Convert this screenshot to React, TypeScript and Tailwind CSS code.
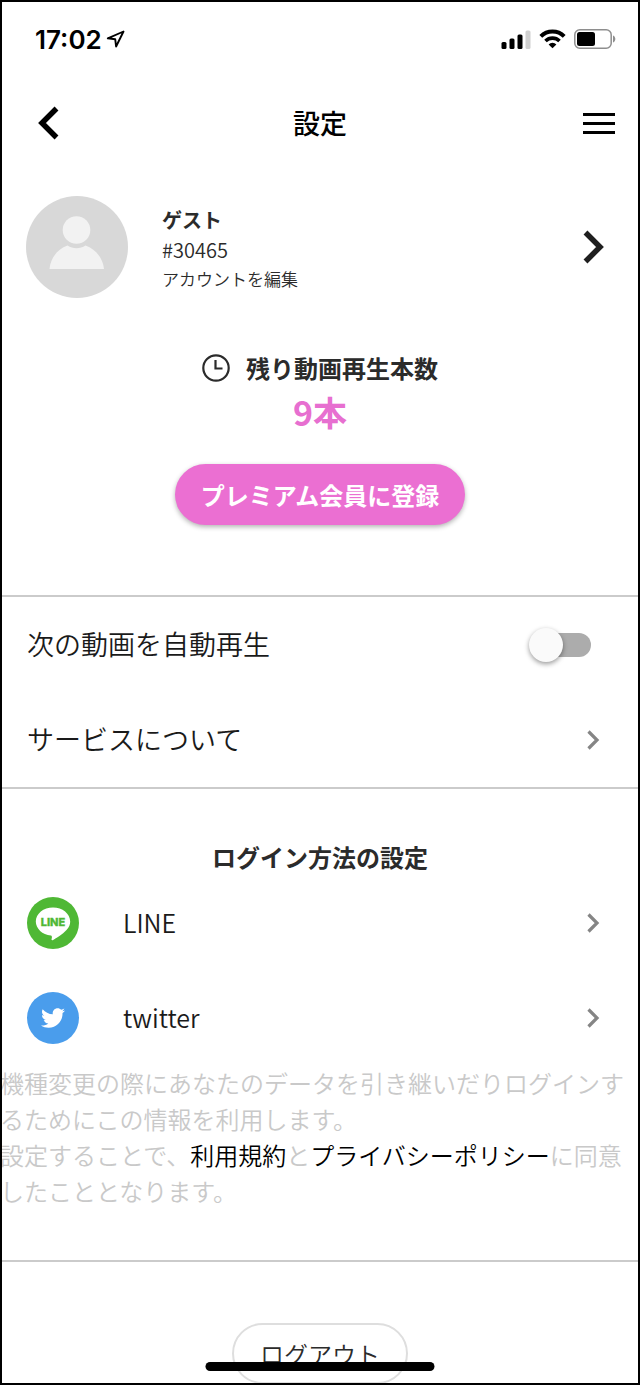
import { useState, type ReactNode } from "react";
import clsx from "clsx";
import { FaTwitter } from "react-icons/fa";

function StatusIcons() {
  return (
    <div className="flex items-center gap-2">
      <svg width="30" height="19" viewBox="0 0 30 19" aria-hidden="true">
        <rect x="0.5" y="12" width="5" height="7" rx="1.5" />
        <rect x="8.5" y="8.5" width="5" height="10.5" rx="1.5" />
        <rect x="16.5" y="4.5" width="5" height="14.5" rx="1.5" />
        <rect x="24.5" y="0.5" width="5" height="18.5" rx="1.5" fill="#d0d0d0" />
      </svg>
      <svg width="27" height="20" viewBox="0 0 27 20" aria-hidden="true">
        <g fill="none" stroke="#000" strokeWidth="4">
          <path d="M1.8 7.3a16.6 16.6 0 0 1 23.4 0" />
          <path d="M6.5 12a10 10 0 0 1 14 0" strokeWidth="3.6" />
        </g>
        <path d="M13.5 19.2 9.6 15.4a5.5 5.5 0 0 1 7.8 0z" />
      </svg>
      <svg width="42" height="20" viewBox="0 0 42 20" aria-hidden="true">
        <rect x="0.8" y="0.8" width="36.4" height="18.4" rx="5" fill="none" stroke="#8e8e8e" strokeWidth="1.5" />
        <rect x="3" y="3" width="18" height="14" rx="2.5" />
        <path d="M39 6.5c1.6.6 2.3 2 2.3 3.5s-.7 2.9-2.3 3.5z" fill="#8e8e8e" />
      </svg>
    </div>
  );
}

function Chevron({ size, className }: { size: "lg" | "sm"; className?: string }) {
  return size === "lg" ? (
    <svg width="22" height="34" viewBox="0 0 22 34" fill="none" className={className} aria-hidden="true">
      <path d="M2.5 2.5 17 17 2.5 31.5" stroke="currentColor" strokeWidth="5.5" />
    </svg>
  ) : (
    <svg width="13" height="20" viewBox="0 0 13 20" fill="none" className={className} aria-hidden="true">
      <path d="M1.5 1.5 10 10l-8.5 8.5" stroke="currentColor" strokeWidth="3.2" />
    </svg>
  );
}

function Avatar() {
  return (
    <svg width="102" height="102" viewBox="0 0 102 102" aria-hidden="true">
      <circle cx="51" cy="51" r="51" fill="#d8d8d8" />
      <circle cx="50.5" cy="34" r="13.8" fill="#f2f2f2" />
      <path d="M23.5 73c1-11 8-20 18-23.5 5.5 3.7 12.5 3.7 18 0C69.5 53 77 62 78 73z" fill="#f2f2f2" />
    </svg>
  );
}

function LineLogo() {
  return (
    <svg width="52" height="52" viewBox="0 0 52 52" aria-hidden="true">
      <circle cx="26" cy="26" r="26" fill="#4fb835" />
      <path
        d="M26 10.5c9.5 0 17.2 6.2 17.2 14 0 3.1-1.2 5.9-3.7 8.6-3.6 4.1-11.6 9.1-13.4 9.900-1.800.8-1.600-.5-1.500-.9l.3-1.500c.1-.6 0-1.700-1-2C15.4 37.8 8.8 31.6 8.8 24.5c0-7.8 7.7-14 17.2-14z"
        fill="#fff"
      />
      <text
        x="26"
        y="29"
        textAnchor="middle"
        fill="#4fb835"
        stroke="#4fb835"
        strokeWidth="0.3"
        className="font-['Inter',sans-serif] text-[11px] font-extrabold"
      >
        LINE
      </text>
    </svg>
  );
}

function TwitterLogo() {
  return (
    <span className="flex size-[52px] items-center justify-center rounded-full bg-[#4a9dec]">
      <FaTwitter className="size-6 text-white" aria-hidden="true" />
    </span>
  );
}

function LinkRow({ icon, label }: { icon?: ReactNode; label: string }) {
  return (
    <a
      href="#"
      className={clsx(
        "flex h-[95px] items-center pr-10 pl-[27px] font-[350] text-[#1a1a1a]",
        icon ? "text-[25px]" : "text-[27px]",
      )}
    >
      {icon && <span className="mr-11">{icon}</span>}
      <span className="flex-1">{label}</span>
      <Chevron size="sm" className="text-[#858585]" />
    </a>
  );
}

export default function App() {
  const [autoPlay, setAutoPlay] = useState(false);

  return (
    <div className="relative h-screen overflow-hidden bg-white font-['Noto_Sans_CJK_JP',sans-serif] text-[#2b2b2b]">
      <div className="flex h-[78px] items-center justify-between pr-6 pl-[35px] text-black">
        <div className="flex items-center gap-1">
          <span className="font-['Inter',sans-serif] text-[26px] font-semibold">17:02</span>
          <svg width="19" height="19" viewBox="0 0 19 19" fill="none" aria-hidden="true">
            <path d="M17.5 1.5 1.8 8.3l7.4.9.9 7.3z" stroke="#000" strokeWidth="1.9" strokeLinejoin="round" />
          </svg>
        </div>
        <StatusIcons />
      </div>

      <header className="grid h-[90px] grid-cols-[1fr_auto_1fr] items-center px-[25px] text-black">
        <button type="button" aria-label="戻る" className="justify-self-start pl-3">
          <Chevron size="lg" className="rotate-180" />
        </button>
        <h1 className="text-[27px] font-medium">設定</h1>
        <button type="button" aria-label="メニュー" className="flex flex-col gap-[6px] justify-self-end">
          <span className="h-[3px] w-8 bg-black" />
          <span className="h-[3px] w-8 bg-black" />
          <span className="h-[3px] w-8 bg-black" />
        </button>
      </header>

      <a href="#" className="flex h-[158px] items-center pr-[35px] pl-[26px]">
        <Avatar />
        <div className="ml-[34px] flex-1 pt-1">
          <p className="text-[20px] leading-[30px] font-bold">ゲスト</p>
          <p className="text-[20px] leading-[30px] font-[350]">#30465</p>
          <p className="text-[17px] leading-[28px] font-[350]">アカウントを編集</p>
        </div>
        <Chevron size="lg" className="text-[#1f1f1f]" />
      </a>

      <section className="flex flex-col items-center pt-6 pb-[70px]">
        <h2 className="flex h-9 items-center gap-4 text-[24px] font-bold">
          <svg width="28" height="28" viewBox="0 0 28 28" fill="none" stroke="currentColor" strokeWidth="2.2" aria-hidden="true">
            <circle cx="14" cy="14" r="12.7" />
            <path d="M13.5 6v8.5h7" />
          </svg>
          残り動画再生本数
        </h2>
        <p className="h-[52px] text-[34px] leading-[52px] font-bold text-[#e76fd0]">9本</p>
        <button
          type="button"
          className="mt-[26px] h-[61px] rounded-full bg-[#eb6fd2] px-[26px] text-[24px] font-bold text-white shadow-[0_2px_5px_rgba(0,0,0,0.3)]"
        >
          プレミアム会員に登録
        </button>
      </section>

      <section className="border-t-2 border-[#cbcbcb]">
        <label className="flex h-[95px] cursor-pointer items-center justify-between pr-[49px] pl-[27px] text-[27px] font-[350] text-[#1a1a1a]">
          次の動画を自動再生
          <input
            type="checkbox"
            role="switch"
            className="peer sr-only"
            checked={autoPlay}
            onChange={(e) => setAutoPlay(e.target.checked)}
          />
          <span
            className={clsx(
              "flex h-6 w-[54px] items-center rounded-full peer-focus-visible:ring-2",
              autoPlay ? "justify-end bg-[#f0a9e2]" : "justify-start bg-[#acacac]",
            )}
          >
            <span
              className={clsx(
                "size-[34px] shrink-0 rounded-full shadow-[0_2px_5px_rgba(0,0,0,0.4)]",
                autoPlay ? "-mr-2 bg-[#eb6fd2]" : "-ml-2 bg-[#fafafa]",
              )}
            />
          </span>
        </label>
        <LinkRow label="サービスについて" />
      </section>

      <section className="border-t-2 border-[#cbcbcb] pt-[50px] pb-[51px]">
        <h2 className="text-center text-[24px] leading-9 font-bold">ログイン方法の設定</h2>
        <LinkRow icon={<LineLogo />} label="LINE" />
        <LinkRow icon={<TwitterLogo />} label="twitter" />
        <p className="text-[24px] leading-9 font-[350] text-[#c9c9c9]">
          機種変更の際にあなたのデータを引き継いだりログインするためにこの情報を利用します。
          <br />
          設定することで、
          <a href="#" className="text-black">利用規約</a>と
          <a href="#" className="text-black">プライバシーポリシー</a>
          に同意したこととなります。
        </p>
      </section>

      <section className="flex justify-center border-t-2 border-[#cbcbcb] pt-[61px]">
        <button type="button" className="h-[61px] rounded-full border-2 border-[#dedede] px-[26px] text-[24px] font-[350]">
          ログアウト
        </button>
      </section>

      <div className="absolute bottom-[14px] left-1/2 h-[9px] w-[229px] -translate-x-1/2 rounded-full bg-black" />
      <div className="pointer-events-none absolute inset-0 border-2 border-black" />
    </div>
  );
}
